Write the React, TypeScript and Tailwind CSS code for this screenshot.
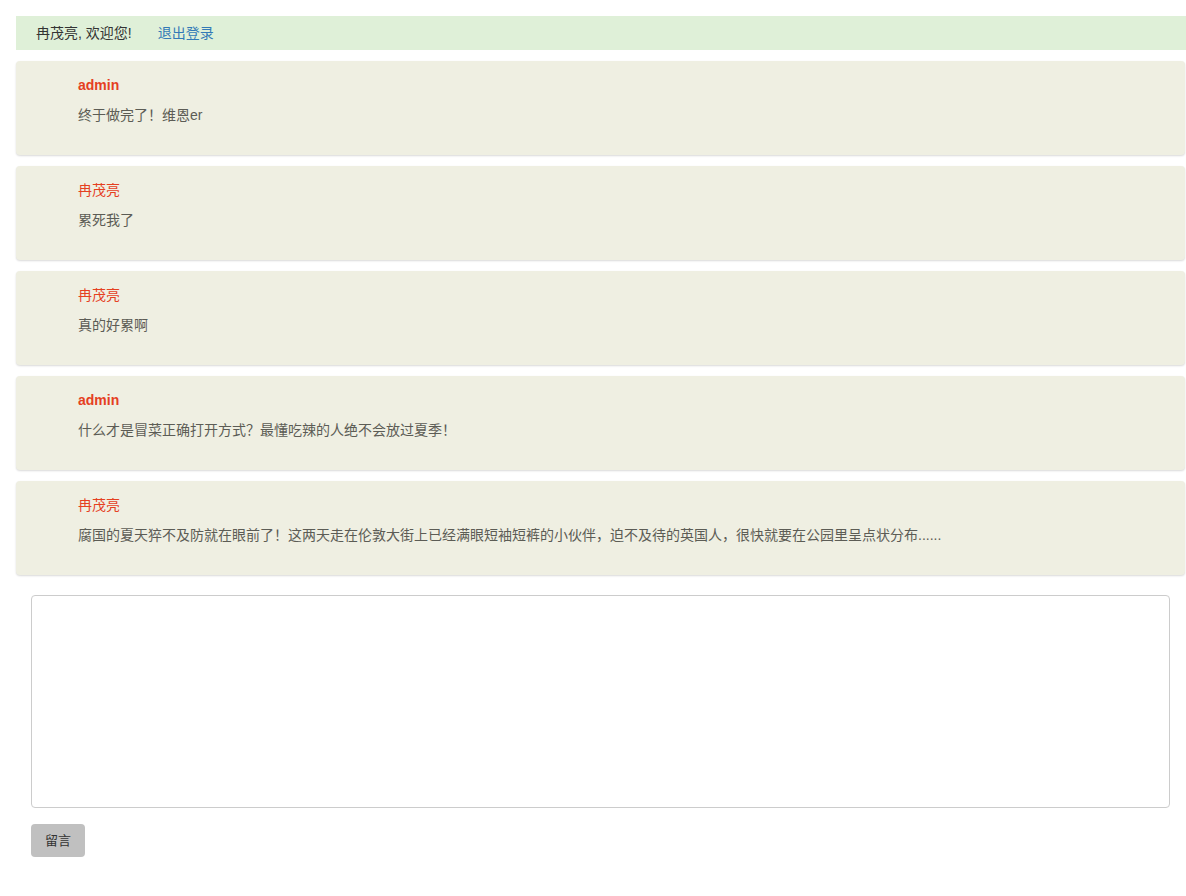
const messages = [
  { id: 1, name: 'admin', bold: true, text: '终于做完了！维恩er' },
  { id: 2, name: '冉茂亮', bold: false, text: '累死我了' },
  { id: 3, name: '冉茂亮', bold: false, text: '真的好累啊' },
  { id: 4, name: 'admin', bold: true, text: '什么才是冒菜正确打开方式？最懂吃辣的人绝不会放过夏季！' },
  {
    id: 5,
    name: '冉茂亮',
    bold: false,
    text: '腐国的夏天猝不及防就在眼前了！这两天走在伦敦大街上已经满眼短袖短裤的小伙伴，迫不及待的英国人，很快就要在公园里呈点状分布......',
  },
];

export default function App() {
  return (
    <div
      className="min-h-[896px] bg-white pt-4 pl-4 text-[14px] text-[#333]"
      style={{ fontFamily: '"Liberation Sans", "Noto Sans CJK SC", sans-serif' }}
    >
      {/* Welcome bar */}
      <div className="flex h-[34px] items-center bg-[#dff0d8] pl-5">
        <span className="text-[#333]">冉茂亮, 欢迎您!</span>
        <a href="#" className="ml-[26px] text-[#337ab7]">退出登录</a>
      </div>

      {/* Message list */}
      <div className="mt-[11px] mr-px flex flex-col gap-[11px]">
        {messages.map((m) => (
          <div
            key={m.id}
            className="h-[94px] rounded-[4px] bg-[#efefe2] pt-[14px] pl-[62px] shadow-[0_1px_2px_rgba(0,0,0,0.15)]"
          >
            <div className={`leading-[20px] text-[#e5401f] ${m.bold ? 'font-bold' : ''}`}>{m.name}</div>
            <div className="mt-[10px] leading-[20px] text-[#5c5c55]">{m.text}</div>
          </div>
        ))}
      </div>

      {/* Compose */}
      <div className="mt-5 pl-[15px]">
        <textarea className="block h-[213px] w-[1139px] resize-none rounded-[4px] border border-[#cccccc] bg-white outline-none" />
        <button className="mt-4 h-[33px] w-[54px] rounded-[4px] bg-[#c0c0c0] text-[13px] text-[#333]">留言</button>
      </div>
    </div>
  );
}
